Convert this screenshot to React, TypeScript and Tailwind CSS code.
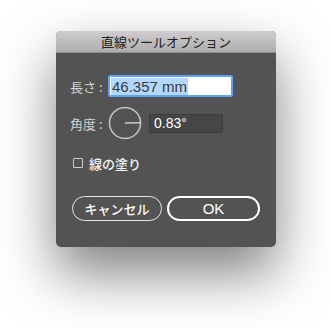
import React from 'react';

const jp = { fontFamily: '"Noto Sans CJK JP", "Liberation Sans", sans-serif' };

export default function App() {
    return (
        <div className="w-[331px] h-[328px] bg-white overflow-hidden pt-[31px] pl-[56px]" style={jp}>
            <div className="w-[220px] h-[216px] rounded-[5px] bg-[#535353] shadow-[0_26px_55px_rgba(0,0,0,0.5)] overflow-hidden flex flex-col">
                {/* Title bar */}
                <div className="h-[22px] bg-gradient-to-b from-[#cfcdcf] to-[#aeacae] border-b border-[#8d8b8d] flex items-center justify-center text-[13px] text-[#222] leading-none">
                    直線ツールオプション
                </div>

                <div className="flex flex-col pl-[14px] pt-[22px]">
                    {/* Length */}
                    <div className="flex items-center h-[22px]">
                        <span className="w-[38px] text-[13px] text-[#d4d4d4] leading-none">長さ :</span>
                        <div className="w-[125px] h-[22px] border-2 border-[#5ea3f5] rounded-[2px] bg-white flex items-center pl-[1px]">
                            <span className="bg-[#b3d7fe] text-[#3a3a3a] text-[15px] leading-[17px] px-[1px]" style={{ fontFamily: '"Liberation Sans", sans-serif' }}>
                                46.357 mm
                            </span>
                        </div>
                    </div>

                    {/* Angle */}
                    <div className="flex items-center mt-[10px] h-[32px]">
                        <span className="w-[38px] text-[13px] text-[#d4d4d4] leading-none">角度 :</span>
                        <svg width="34" height="32" viewBox="0 0 34 32" className="shrink-0">
                            <circle cx="17" cy="16" r="15.5" fill="none" stroke="#c9c9c9" strokeWidth="1.5" />
                            <line x1="17" y1="16" x2="32.5" y2="15.8" stroke="#c9c9c9" strokeWidth="1.5" />
                        </svg>
                        <div className="ml-[7px] w-[74px] h-[19px] bg-[#464646] border border-[#3c3c3c] rounded-[2px] flex items-center pl-[4px] text-[14px] text-white leading-none" style={{ fontFamily: '"Liberation Sans", sans-serif' }}>
                            0.83°
                        </div>
                    </div>

                    {/* Checkbox */}
                    <div className="flex items-center mt-[17px] h-[14px]">
                        <div className="w-[10px] h-[10px] border border-[#cfcfcf] rounded-[1px] ml-[3px]" />
                        <span className="ml-[6px] text-[13px] text-[#f2f2f2] font-medium leading-none">線の塗り</span>
                    </div>

                    {/* Buttons */}
                    <div className="flex mt-[26px] ml-[2px] gap-[5px]">
                        <button className="w-[90px] h-[25px] rounded-full border border-[#e6e6e6] text-[13px] text-white font-medium leading-none flex items-center justify-center">
                            キャンセル
                        </button>
                        <button className="w-[93px] h-[25px] rounded-full border-2 border-white text-[15px] text-white leading-none flex items-center justify-center" style={{ fontFamily: '"Liberation Sans", sans-serif' }}>
                            OK
                        </button>
                    </div>
                </div>
            </div>
        </div>
    );
}
